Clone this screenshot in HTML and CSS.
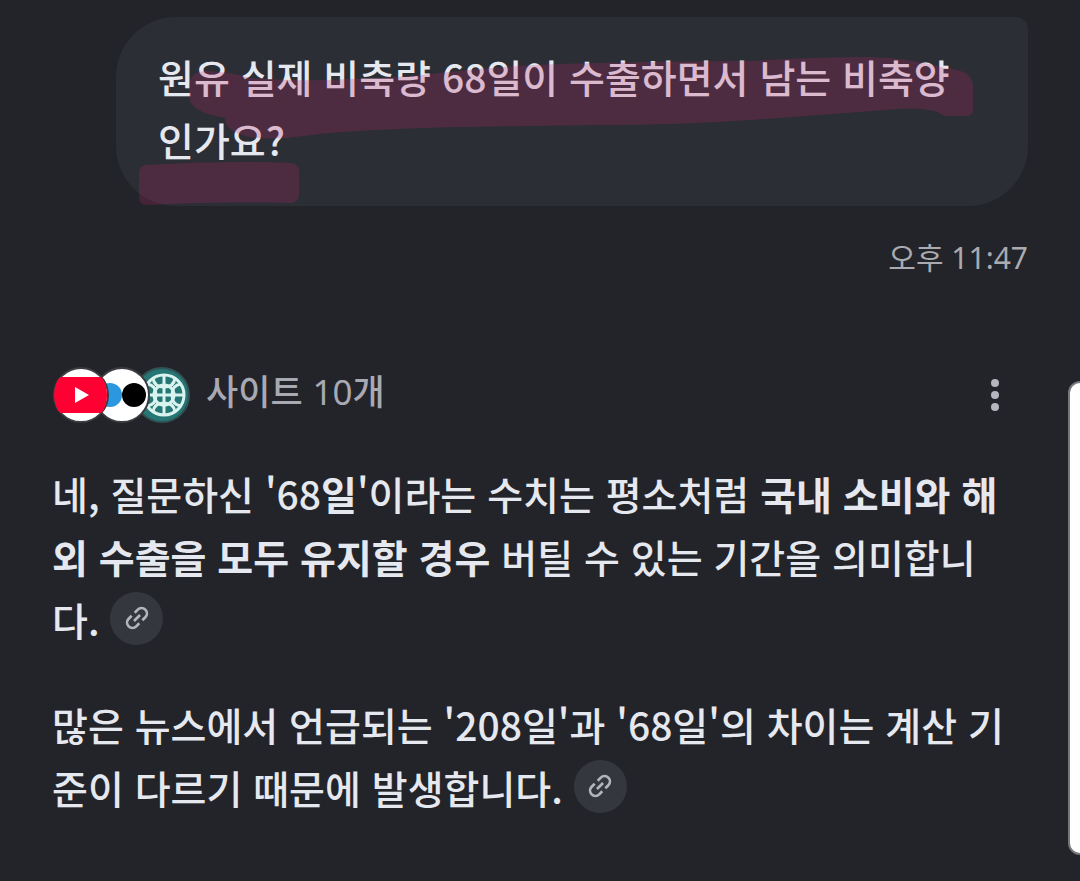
FILE: index.html
```html
<!DOCTYPE html>
<html lang="ko">
<head>
    <meta charset="UTF-8">
    <meta name="viewport" content="width=device-width, initial-scale=1.0">
    <title>원유 비축량</title>
    <link rel="stylesheet" href="styles.css">
</head>
<body>
    <main class="chat">
        <section class="question">
            <div class="bubble">
                <p>원유 실제 비축량 68일이 수출하면서 남는 비축양인가요?</p>
                <svg class="marker" width="912" height="189" viewBox="116 17 912 189" aria-hidden="true">
                    <path d="M189 86Q190 72 205 71Q232 72 250 78Q300 82 350 79Q400 78 440 73Q500 66 560 64Q650 61 750 61Q820 57 870 57Q910 58 945 68Q973 70 973 86V110Q973 116 966 116H948Q942 116 938 112Q920 106 885 110Q820 115 750 120Q680 125 600 125L460 127Q370 129 320 134L286 138Q250 140 237 133Q225 128 225 118Q189 112 189 96Z"/>
                    <path d="M139 173Q139 166 146 165Q220 160 291 163Q299 164 299 171V194Q299 202 291 203Q220 201 147 205Q139 205 139 197Z"/>
                </svg>
            </div>
            <time class="time">오후 11:47</time>
        </section>

        <section class="answer">
            <header class="sources">
                <a class="sites" href="#">
                    <svg class="favicons" width="138" height="56" viewBox="0 0 138 56" aria-hidden="true">
                        <g transform="translate(110 28)">
                            <circle r="27" fill="#257674" stroke="#315254" stroke-width="2"/>
                            <g fill="none" stroke="#d9f3ee" stroke-width="3">
                                <circle cx="2" r="20"/>
                                <circle cx="2" r="10"/>
                                <path d="M-18 0H22M2-20V20"/>
                                <path d="M-9-17Q-8-8 2-8T13-17M-9 17Q-8 8 2 8T13 17M-15-11Q-6-10-6 0T-15 11M19-11Q10-10 10 0T19 11"/>
                            </g>
                        </g>
                        <circle cx="70" cy="28" r="27" fill="#fff" stroke="#3b3c42" stroke-width="2"/>
                        <circle cx="58" cy="28" r="12" fill="#2b97df"/>
                        <circle cx="82" cy="28" r="12" fill="#000"/>
                        <circle cx="29" cy="28" r="27" fill="#fff" stroke="#3b3c42" stroke-width="2"/>
                        <path d="M9 10H48Q50 10 52 14Q55 20 55 28T52 42Q50 46 48 46H9Q6 45 4 39Q2 34 2 28T4 17Q6 11 9 10Z" fill="#ff0033"/>
                        <path d="M23 20L37 28L23 36Z" fill="#fff"/>
                    </svg>
                    <span class="count">사이트 <span class="number">10</span>개</span>
                </a>
                <button class="menu" type="button" aria-label="더보기">
                    <svg width="10" height="34" viewBox="0 0 10 34">
                        <circle cx="5" cy="5" r="4"/>
                        <circle cx="5" cy="17" r="4"/>
                        <circle cx="5" cy="29" r="4"/>
                    </svg>
                </button>
            </header>

            <p>네, 질문하신 '68<b>일</b>'이라는 수치는 평소처럼 <b>국내 소비와 해외 수출을 모두 유지할 경우</b> 버틸 수 있는 기간을 의미합니다. <button class="link" type="button" aria-label="출처 링크">
                <svg width="30" height="30" viewBox="0 0 28 28"><g transform="rotate(-45 14 14)"><path d="M12 9H8a5 5 0 0 0 0 10H12M16 9H20a5 5 0 0 1 0 10H16M10 14H18"/></g></svg>
            </button></p>
            <p>많은 뉴스에서 언급되는 '208일'과 '68일'의 차이는 계산 기준이 다르기 때문에 발생합니다. <button class="link" type="button" aria-label="출처 링크">
                <svg width="30" height="30" viewBox="0 0 28 28"><g transform="rotate(-45 14 14)"><path d="M12 9H8a5 5 0 0 0 0 10H12M16 9H20a5 5 0 0 1 0 10H16M10 14H18"/></g></svg>
            </button></p>
        </section>
    </main>
    <div class="edge-panel"></div>
</body>
</html>
```
FILE: styles.css
```css
* {
    box-sizing: border-box;
}
body {
    margin: 0;
    min-height: 100vh;
    background: #232429;
    color: #e6e8f0;
    font-family: "Noto Sans CJK KR", sans-serif;
    font-size: 39px;
    font-weight: 500;
    line-height: 63px;
    overflow-x: hidden;
}
p {
    margin: 0;
}
button {
    padding: 0;
    border: none;
    background: none;
    cursor: pointer;
}
.chat {
    padding: 17px 52px 32px;
}
.question {
    display: flex;
    flex-direction: column;
    align-items: flex-end;
    margin-left: 64px;
}
.bubble {
    position: relative;
    width: 100%;
    padding: 28px 60px 35px 42px;
    background: #2c2e35;
    border-radius: 60px 12px 60px 60px;
}
.marker {
    position: absolute;
    top: 0;
    left: 0;
    fill: rgba(186, 38, 103, 0.24);
    pointer-events: none;
}
.time {
    margin-top: 32px;
    color: #a9abb0;
    font-family: "Noto Sans", "Noto Sans CJK KR", sans-serif;
    font-size: 30px;
    font-weight: 400;
    line-height: 40px;
}
.sources {
    display: flex;
    justify-content: space-between;
    align-items: center;
    margin-top: 88px;
    padding-right: 28px;
}
.sites {
    display: flex;
    align-items: center;
    gap: 16px;
    color: #a8a9b2;
    font-size: 35px;
    line-height: 56px;
    text-decoration: none;
}
.count {
    padding-bottom: 9px;
    line-height: 47px;
}
.number {
    font-family: "Noto Sans", sans-serif;
    font-weight: 400;
}
.menu {
    display: flex;
    fill: #b5b6bf;
}
.answer p {
    margin-top: 38px;
    padding-right: 8px;
}
.answer p + p {
    margin-top: 42px;
}
.link {
    display: inline-flex;
    justify-content: center;
    align-items: center;
    width: 53px;
    height: 53px;
    border-radius: 50%;
    background: #35373e;
    vertical-align: 3px;
}
.link svg {
    fill: none;
    stroke: #b3b5be;
    stroke-width: 2.5;
}
.edge-panel {
    position: fixed;
    top: 381px;
    right: -20px;
    width: 32px;
    height: 474px;
    border: 2px solid #77787b;
    border-radius: 12px;
    background: #fff;
}
```
